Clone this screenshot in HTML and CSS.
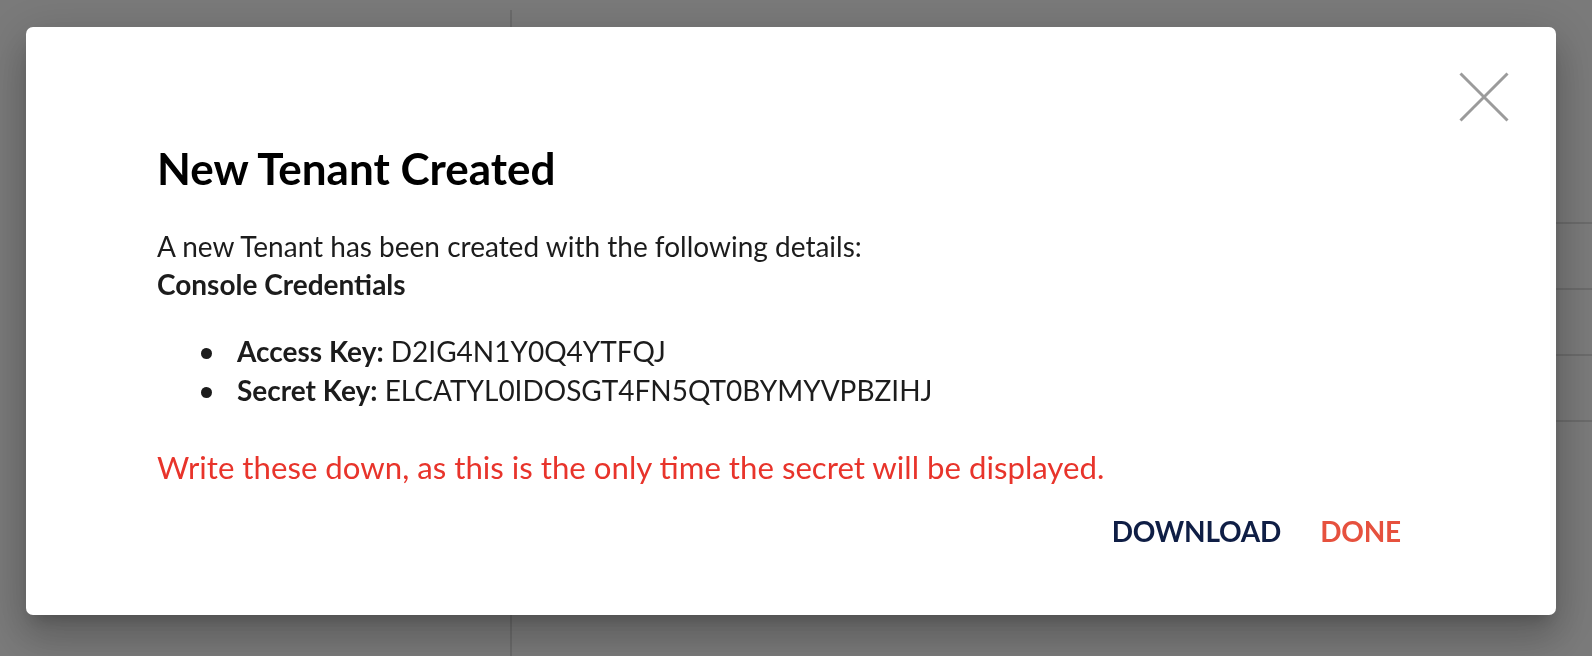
FILE: index.html
```html
<!DOCTYPE html>
<html lang="en">
<head>
    <meta charset="UTF-8">
    <meta name="viewport" content="width=device-width, initial-scale=1.0">
    <title>New Tenant Created</title>
    <link rel="stylesheet" href="styles.css">
</head>
<body>
    <div class="page">
        <aside class="sidebar"></aside>
        <main class="content">
            <div class="row"></div>
            <div class="row"></div>
            <div class="row"></div>
            <div class="row"></div>
        </main>
    </div>

    <div class="backdrop">
        <div class="dialog" role="dialog" aria-labelledby="dialog-title">
            <button class="close-button" aria-label="close">
                <svg width="50" height="50" viewBox="0 0 50 50">
                    <path d="M1.5 1.5 L48.5 48.5 M48.5 1.5 L1.5 48.5" stroke="#9b9b9b" stroke-width="3" fill="none"/>
                </svg>
            </button>

            <h2 id="dialog-title" class="dialog-title">New Tenant Created</h2>

            <div class="dialog-body">
                <p class="intro">A new Tenant has been created with the following details:</p>
                <p class="section-label">Console Credentials</p>
                <ul class="credentials">
                    <li><b>Access Key:</b> D2IG4N1Y0Q4YTFQJ</li>
                    <li><b>Secret Key:</b> ELCATYL0IDOSGT4FN5QT0BYMYVPBZIHJ</li>
                </ul>
                <p class="warning">Write these down, as this is the only time the secret will be displayed.</p>
            </div>

            <div class="dialog-actions">
                <button class="action-button download">Download</button>
                <button class="action-button done">Done</button>
            </div>
        </div>
    </div>
</body>
</html>
```

FILE: styles.css
```css
* {
    box-sizing: border-box;
}

body {
    margin: 0;
    font-family: Lato, "Noto Sans", sans-serif;
    overflow: hidden;
}

/* page behind the modal */
.page {
    display: flex;
    height: 656px;
    padding-top: 10px;
    background-color: #f4f4f4;
}

.sidebar {
    width: 512px;
    border-right: 2px solid #d6d6d6;
}

.content {
    flex: 1;
    padding-top: 212px;
}

.row {
    height: 66px;
    border-top: 2px solid #d6d6d6;
}

/* modal */
.backdrop {
    position: fixed;
    top: 0;
    left: 0;
    right: 0;
    bottom: 0;
    background-color: rgba(0, 0, 0, 0.5);
    display: flex;
    align-items: flex-start;
    padding: 27px 36px 0 26px;
}

.dialog {
    position: relative;
    flex: 1;
    background-color: #fff;
    border-radius: 7px;
    padding: 115px 139px 57px 131px;
    box-shadow: 0 11px 15px -7px rgba(0, 0, 0, 0.2),
                0 24px 38px 3px rgba(0, 0, 0, 0.14),
                0 9px 46px 8px rgba(0, 0, 0, 0.12);
}

.close-button {
    position: absolute;
    top: 45px;
    right: 47px;
    width: 50px;
    height: 50px;
    padding: 0;
    border: none;
    background: none;
    cursor: pointer;
}

.close-button svg {
    display: block;
}

.dialog-title {
    margin: 0;
    font-size: 44px;
    line-height: 52px;
    font-weight: 700;
    color: #000;
}

.dialog-body {
    margin-top: 33px;
    font-size: 28px;
    line-height: 38px;
    color: #1c1c1c;
}

.dialog-body p {
    margin: 0;
}

.section-label {
    font-weight: 700;
}

.credentials {
    margin: 29px 0 0;
    padding-left: 80px;
    list-style: none;
}

.credentials li {
    line-height: 39px;
}

.credentials li::before {
    content: "";
    display: inline-block;
    width: 11px;
    height: 11px;
    margin-left: -36px;
    margin-right: 25px;
    border-radius: 50%;
    background-color: #1c1c1c;
    vertical-align: 3px;
}

.warning {
    margin-top: 38px !important;
    font-size: 31.2px;
    color: #e8342b;
}

.dialog-actions {
    display: flex;
    justify-content: flex-end;
    gap: 7px;
    margin-top: 18px;
}

.action-button {
    padding: 8px 16px;
    border: none;
    background: none;
    font-family: inherit;
    font-size: 28px;
    line-height: 38px;
    font-weight: 700;
    text-transform: uppercase;
    letter-spacing: -0.2px;
    cursor: pointer;
}

.download {
    color: #0f1e45;
}

.done {
    color: #e6513e;
}
```
